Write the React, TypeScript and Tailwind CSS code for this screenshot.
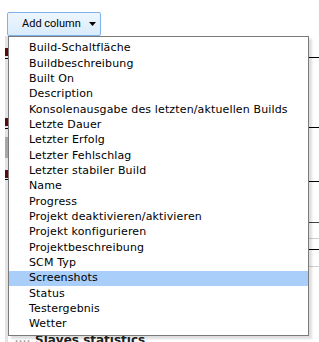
import React from "react";

const items = [
  "Build-Schaltfläche",
  "Buildbeschreibung",
  "Built On",
  "Description",
  "Konsolenausgabe des letzten/aktuellen Builds",
  "Letzte Dauer",
  "Letzter Erfolg",
  "Letzter Fehlschlag",
  "Letzter stabiler Build",
  "Name",
  "Progress",
  "Projekt deaktivieren/aktivieren",
  "Projekt konfigurieren",
  "Projektbeschreibung",
  "SCM Typ",
  "Screenshots",
  "Status",
  "Testergebnis",
  "Wetter",
];

export default function App() {
  return (
    <div className="relative w-[319px] h-[342px] overflow-hidden bg-white">
      <div className="pt-[12px] pl-[7px]">
        <button
          className="flex items-center h-[24px] w-[94px] border border-[#7eb4ea] bg-gradient-to-b from-[#eef6fd] to-[#d8ebfb] rounded-[2px] pl-[14px] text-[11px] text-black"
          style={{ fontFamily: "Roboto, 'Liberation Sans', sans-serif" }}
        >
          <span>Add column</span>
          <svg width="7" height="4" viewBox="0 0 7 4" className="ml-[8px]">
            <path d="M0 0 L7 0 L3.5 4 Z" fill="#000" />
          </svg>
        </button>
      </div>
      {/* background page content */}
      <div className="flex">
        <div className="ml-[5px] w-[3px] h-[306px] bg-[#e3e3e3] flex flex-col">
          <div className="mt-[12px] h-[8px] bg-[#5a0a0a]" />
          <div className="mt-[2px] h-[1px] bg-black" />
          <div className="mt-[59px] h-[8px] bg-[#5a0a0a]" />
          <div className="mt-[2px] h-[1px] bg-black" />
          <div className="mt-[8px] h-[21px] bg-[#a8a8a8]" />
          <div className="mt-[12px] h-[8px] bg-[#5a0a0a]" />
          <div className="mt-[1px] h-[1px] bg-black" />
        </div>
        <div className="flex-1 flex flex-col">
          <div className="h-[22px] border-b border-black" />
          <div className="h-[70px] border-b border-black" />
          <div className="h-[54px] border-b border-black" />
          <div className="h-[41px] border-b border-[#444]" />
          <div className="h-[16px] border-b border-[#d0d0d0]" />
          <div className="h-[11px] border-b border-black" />
          <div className="h-[17px] border-b border-[#d0d0d0]" />
          <div
            className="mt-[64px] ml-[7px] flex items-center text-[12px] font-bold text-[#222]"
            style={{ fontFamily: "'DejaVu Sans', Verdana, sans-serif" }}
          >
            <span className="w-[20px] text-[#999] text-[8px] tracking-[1px]">....</span>
            <span>Slaves statistics</span>
          </div>
        </div>
      </div>
      {/* dropdown menu */}
      <div
        className="absolute left-[8px] top-[36px] w-[301px] border border-[#7a7a7a] bg-white pt-[4px] pb-[3px] shadow-[3px_3px_2px_rgba(0,0,0,0.13)]"
        style={{ fontFamily: "'DejaVu Sans', Verdana, sans-serif" }}
      >
        {items.map((it) => (
          <div
            key={it}
            className={
              "h-[15.33px] flex items-center pl-[20px] text-[11px] tracking-[0.14px] text-black whitespace-nowrap " +
              (it === "Screenshots" ? "bg-[#aacefa]" : "")
            }
          >
            {it}
          </div>
        ))}
      </div>
    </div>
  );
}
